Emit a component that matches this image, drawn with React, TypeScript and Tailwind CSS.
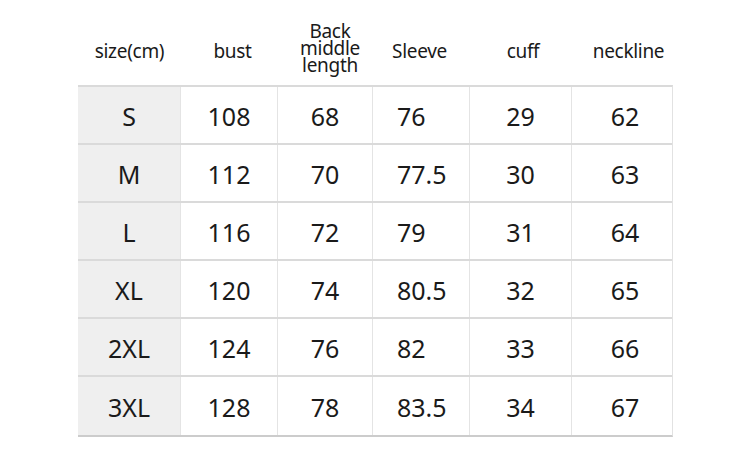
const headers = [
  { label: "size(cm)", cls: "justify-center pt-[6px]" },
  { label: "bust", cls: "justify-center pl-[6px] pt-[6px]" },
  { label: "Back\nmiddle\nlength", cls: "justify-center pl-[9px]" },
  { label: "Sleeve", cls: "justify-start pl-[19px] pt-[6px]" },
  { label: "cuff", cls: "justify-center pl-[4px] pt-[6px]" },
  { label: "neckline", cls: "justify-center pl-[12px] pt-[6px]" },
];

const rows = [
  ["S", "108", "68", "76", "29", "62"],
  ["M", "112", "70", "77.5", "30", "63"],
  ["L", "116", "72", "79", "31", "64"],
  ["XL", "120", "74", "80.5", "32", "65"],
  ["2XL", "124", "76", "82", "33", "66"],
  ["3XL", "128", "78", "83.5", "34", "67"],
];

export default function App() {
  return (
    <div
      className="w-[750px] h-[456px] bg-white text-[#1a1a1a] overflow-hidden"
      style={{ fontFamily: '"Noto Sans", "Open Sans", sans-serif' }}
    >
      <div className="ml-[78px] w-[595px]">
        <div className="grid grid-cols-[103px_97px_95px_97px_102px_101px] h-[85px] pt-[12px] text-[19px]">
          {headers.map((h) => (
            <div key={h.label} className={`flex items-center ${h.cls}`}>
              <span className="whitespace-pre-line text-center leading-[17px] tracking-[-0.3px]">
                {h.label}
              </span>
            </div>
          ))}
        </div>

        <div className="border-t-2 border-[#dadada] border-b-2 border-b-[#cccccc] border-r border-r-[#e2e2e2]">
          {rows.map((r, i) => (
            <div
              key={r[0]}
              className={`grid grid-cols-[103px_97px_95px_97px_102px_101px] h-[58px] text-[25px] ${
                i < rows.length - 1 ? "border-b-2 border-[#dadada]" : ""
              }`}
            >
              {r.map((v, j) => (
                <div
                  key={j}
                  className={`flex items-center pt-[3px] border-r border-[#e4e4e4] last:border-r-0 ${
                    j === 0 ? "bg-[#efefef]" : ""
                  } ${j === 3 ? "justify-start pl-[24px]" : "justify-center"} ${
                    j === 5 ? "pl-[5px]" : ""
                  }`}
                >
                  {v}
                </div>
              ))}
            </div>
          ))}
        </div>
      </div>
    </div>
  );
}
